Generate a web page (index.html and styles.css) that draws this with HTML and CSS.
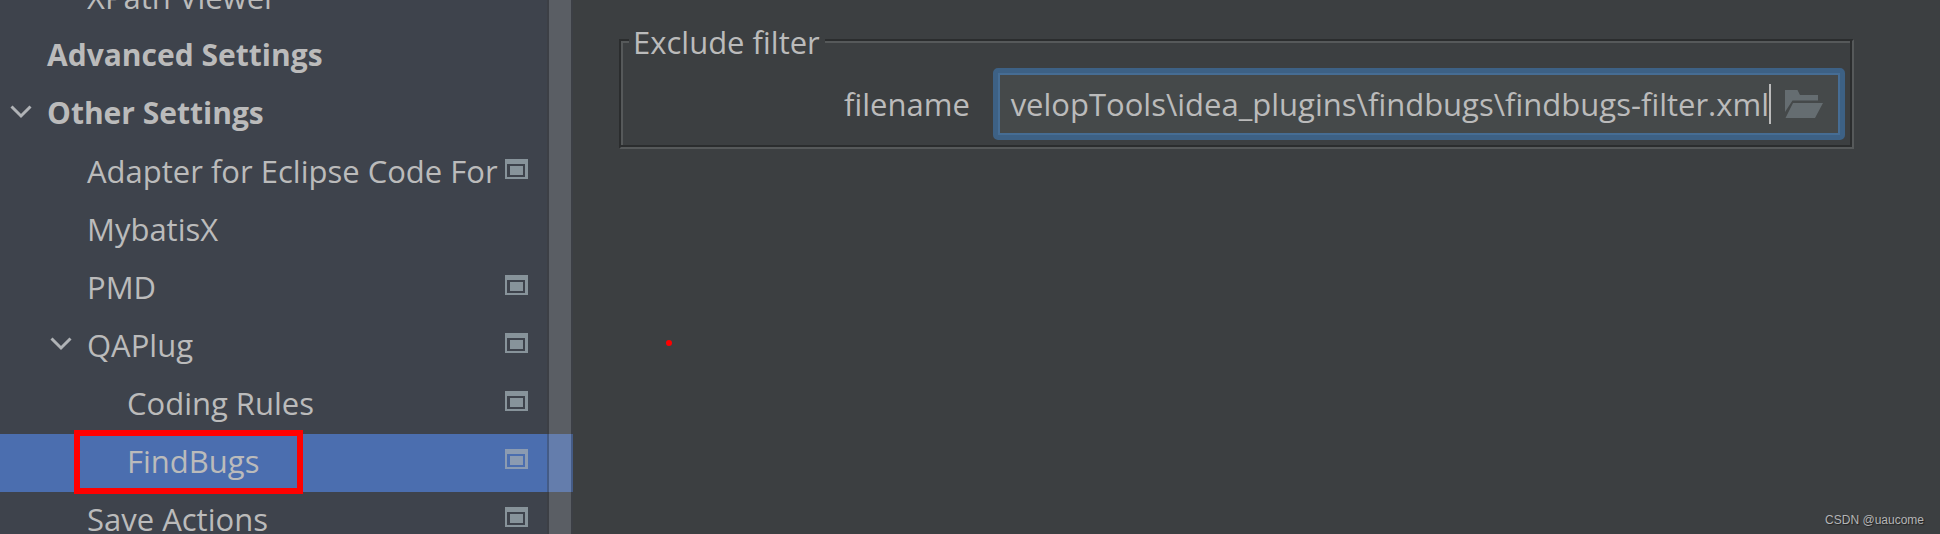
FILE: index.html
```
<!DOCTYPE html>
<html lang="en">

<head>
    <meta charset="utf-8" />
    <title>Settings</title>
    <link rel="stylesheet" href="styles.css">
</head>

<body>
    <svg class="symbols" aria-hidden="true">
        <symbol id="chevron" viewBox="0 0 22 14">
            <path d="M1.5 1.5 L11 11 L20.5 1.5" fill="none" stroke="currentColor" stroke-width="3" />
        </symbol>
        <symbol id="project" viewBox="0 0 23 20">
            <path d="M0 0H23V20H0Z M2 5V18H20V5Z" fill="currentColor" fill-rule="evenodd" />
            <rect x="5" y="7" width="13" height="9" fill="currentColor" />
        </symbol>
    </svg>
    <div class="app">
        <nav class="sidebar">
            <ul class="tree">
                <li><a class="row level2" href="#">XPath Viewer</a></li>
                <li><a class="row level1 group" href="#">Advanced Settings</a></li>
                <li>
                    <a class="row level1 group" href="#">
                        <svg class="chevron"><use href="#chevron" /></svg>
                        <span class="name">Other Settings</span>
                    </a>
                </li>
                <li>
                    <a class="row level2" href="#">
                        <span class="name">Adapter for Eclipse Code For</span>
                        <svg class="project"><use href="#project" /></svg>
                    </a>
                </li>
                <li><a class="row level2" href="#">MybatisX</a></li>
                <li>
                    <a class="row level2" href="#">
                        <span class="name">PMD</span>
                        <svg class="project"><use href="#project" /></svg>
                    </a>
                </li>
                <li>
                    <a class="row level2" href="#">
                        <svg class="chevron"><use href="#chevron" /></svg>
                        <span class="name">QAPlug</span>
                        <svg class="project"><use href="#project" /></svg>
                    </a>
                </li>
                <li>
                    <a class="row level3" href="#">
                        <span class="name">Coding Rules</span>
                        <svg class="project"><use href="#project" /></svg>
                    </a>
                </li>
                <li>
                    <a class="row level3 selected" href="#">
                        <span class="name">FindBugs</span>
                        <svg class="project"><use href="#project" /></svg>
                        <span class="marker"></span>
                    </a>
                </li>
                <li>
                    <a class="row level2" href="#">
                        <span class="name">Save Actions</span>
                        <svg class="project"><use href="#project" /></svg>
                    </a>
                </li>
            </ul>
            <div class="scrollbar"></div>
        </nav>
        <main class="content">
            <fieldset class="filter">
                <legend>Exclude filter</legend>
                <div class="field">
                    <label for="filename">filename</label>
                    <div class="input-box">
                        <input id="filename" type="text" value="velopTools\idea_plugins\findbugs\findbugs-filter.xml">
                        <span class="caret"></span>
                        <button class="browse" type="button" aria-label="Browse">
                            <svg class="folder" viewBox="0 0 38 28">
                                <path d="M0 0H12.500L15 5H33V10.500H7.500L0 22Z M8 13H38L30 28H0.500Z" fill="currentColor" />
                            </svg>
                        </button>
                    </div>
                </div>
            </fieldset>
            <span class="dot"></span>
            <span class="watermark">CSDN @uaucome</span>
        </main>
    </div>
</body>

</html>
```
FILE: styles.css
```
* {
    box-sizing: border-box;
}

body {
    margin: 0;
    background-color: #3c3f41;
    color: #bbbbbb;
    font-family: "Open Sans", "Noto Sans", sans-serif;
    font-size: 31px;
    overflow: hidden;
}

.symbols {
    position: absolute;
    width: 0;
    height: 0;
}

.app {
    display: flex;
    height: 100vh;
}

/* settings tree */

.sidebar {
    position: relative;
    flex: 0 0 573px;
    background-color: #3e434c;
    overflow: hidden;
}

.tree {
    list-style: none;
    margin: -30px 0 0;
    padding: 0;
}

.row {
    position: relative;
    display: flex;
    align-items: center;
    height: 58px;
    padding: 0 45px 5px 0;
    color: inherit;
    text-decoration: none;
    white-space: nowrap;
}

.level1 {
    padding-left: 47px;
}

.level2 {
    padding-left: 87px;
}

.level3 {
    padding-left: 127px;
}

.group {
    font-size: 30px;
    font-weight: bold;
}

.selected {
    background-color: #4b6eaf;
}

.chevron {
    width: 22px;
    height: 14px;
    margin: 0 15px 2px -37px;
    color: #b0b3b6;
}

.project {
    width: 23px;
    height: 20px;
    margin: 0 0 4px auto;
    color: #87939a;
}

.selected .project {
    color: #8b9bb1;
}

.marker {
    position: absolute;
    top: -4px;
    left: 74px;
    width: 229px;
    height: 64px;
    border: 6px solid #ff0000;
}

.scrollbar {
    position: absolute;
    top: 0;
    right: 0;
    bottom: 0;
    width: 26px;
    border: solid rgba(56, 56, 56, 0.35);
    border-width: 0 2px;
    background-color: rgba(166, 166, 166, 0.28);
    background-clip: padding-box;
}

/* right side */

.content {
    position: relative;
    flex: 1;
    padding: 18px 86px 0 46px;
}

.filter {
    margin: 0;
    padding: 6px 7px 7px 8px;
    border: 2px solid;
    border-color: #2b2d2e #56595a #56595a #2b2d2e;
    box-shadow: inset -2px -2px 0 #2b2d2e, inset 2px 2px 0 #56595a;
}

.filter legend {
    padding: 4px 5px 0 4px;
    background-color: #3c3f41;
    line-height: 40px;
}

.field {
    display: grid;
    grid-template-columns: 2fr 5fr;
    align-items: center;
    gap: 23px;
}

.field label {
    text-align: right;
}

.input-box {
    display: flex;
    align-items: center;
    height: 72px;
    padding: 0 17px 0 5px;
    border: 5px solid #3d6185;
    border-radius: 5px;
    background-color: #45494a;
    box-shadow: inset 0 0 0 2px #466d94;
}

.input-box input {
    flex: 1;
    min-width: 0;
    height: 44px;
    padding: 0;
    border: 0;
    outline: 0;
    background: none;
    color: inherit;
    font: inherit;
    text-align: right;
}

.caret {
    width: 2px;
    height: 40px;
    background-color: #bbbbbb;
}

.browse {
    margin-left: 14px;
    padding: 0;
    border: 0;
    background: none;
    color: #656d71;
}

.folder {
    display: block;
    width: 38px;
    height: 28px;
}

.dot {
    position: absolute;
    top: 340px;
    left: 93px;
    width: 6px;
    height: 6px;
    border-radius: 50%;
    background-color: #ff0000;
}

.watermark {
    position: absolute;
    right: 16px;
    bottom: 7px;
    color: #b4b5b6;
    font-family: "Liberation Sans", Arial, sans-serif;
    font-size: 12px;
    text-shadow: 1px 1px 1px #222222;
}
```
